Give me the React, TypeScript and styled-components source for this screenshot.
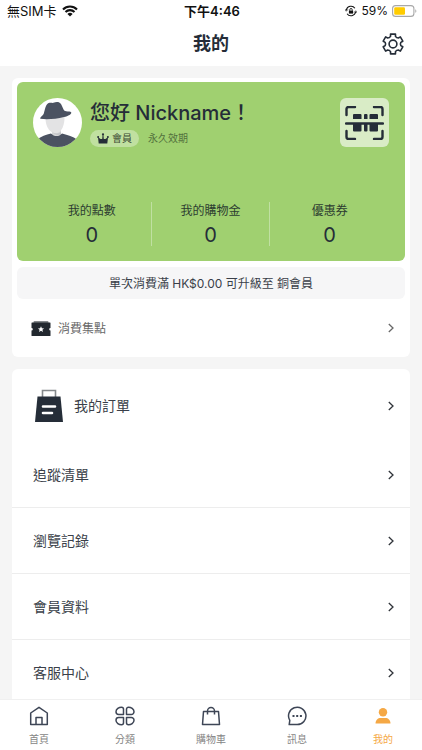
import React from 'react';
import styled, { createGlobalStyle } from 'styled-components';

const INK = '#252d38';

const GlobalStyle = createGlobalStyle`
  *, *::before, *::after { box-sizing: border-box; }
  body {
    margin: 0;
    background: #f5f5f5;
    color: ${INK};
    font-family: Inter, "Noto Sans CJK TC", sans-serif;
  }
  a { color: inherit; text-decoration: none; }
  button { padding: 0; border: 0; background: none; color: inherit; font: inherit; cursor: pointer; }
  h1, h2, p, dl, dd, ul { margin: 0; padding: 0; }
  ul { list-style: none; }
  svg { display: block; flex: none; }
`;

const Screen = styled.div`
  display: flex;
  flex-direction: column;
  height: 100vh;
  overflow: hidden;
`;

const TopArea = styled.header`
  flex: none;
  background: #fff;
`;

const StatusBar = styled.div`
  display: grid;
  grid-template-columns: 1fr auto 1fr;
  align-items: center;
  height: 22px;
  padding: 0 5px 0 7px;
  color: #111;
  font-size: 12px;
  line-height: 20px;
`;

const StatusGroup = styled.div<{ $end?: boolean }>`
  display: flex;
  align-items: center;
  justify-content: ${(p) => (p.$end ? 'flex-end' : 'flex-start')};
  gap: ${(p) => (p.$end ? 4 : 5)}px;
`;

const Carrier = styled.span`
  font-size: 13px;
`;

const Clock = styled.time`
  font-size: 13px;
  font-weight: 600;
`;

const TitleBar = styled.div`
  display: grid;
  grid-template-columns: 1fr auto 1fr;
  align-items: center;
  height: 44px;
  padding: 0 17px;
`;

const PageTitle = styled.h1`
  grid-column: 2;
  font-size: 18px;
  line-height: 24px;
  font-weight: 600;
`;

const SettingsButton = styled.button`
  justify-self: end;
`;

const Content = styled.main`
  flex: 1;
  min-height: 0;
  overflow: hidden;
  display: flex;
  flex-direction: column;
  gap: 12px;
  padding: 12px 12px 0;
`;

const Card = styled.section<{ $padded?: boolean }>`
  flex: none;
  padding: ${(p) => (p.$padded ? '4px 5px 0' : '0')};
  border-radius: 6px;
  background: #fff;
`;

const MemberPanel = styled.div`
  padding: 16px 16px 15px;
  border-radius: 6px;
  background: #a0d070;
`;

const Profile = styled.div`
  display: flex;
  gap: 8px;
`;

const Identity = styled.div`
  flex: 1;
  min-width: 0;
`;

const Greeting = styled.h2`
  height: 32px;
  font-size: 20px;
  line-height: 30px;
  font-weight: 500;
  white-space: nowrap;
`;

const Membership = styled.div`
  display: flex;
  align-items: center;
  gap: 9px;
  color: #53703d;
  font-size: 10px;
  line-height: 17px;
`;

const LevelBadge = styled.span`
  display: flex;
  align-items: center;
  gap: 3px;
  height: 17px;
  padding: 0 7px;
  border-radius: 9px;
  background: #c0e0a0;
  color: #3c4b35;
`;

const ScanButton = styled.button`
  flex: none;
  display: grid;
  place-items: center;
  width: 49px;
  height: 49px;
  border-radius: 6px;
  background: #d9ecc6;
`;

const Balances = styled.dl`
  display: grid;
  grid-template-columns: repeat(3, 1fr);
  margin-top: 55px;
`;

const Balance = styled.div`
  height: 44px;
  padding-top: 1px;
  text-align: center;
  &:not(:last-child) { border-right: 1px solid #c0e0a2; }
`;

const BalanceLabel = styled.dt`
  color: #2d3d30;
  font-size: 12px;
  line-height: 16px;
`;

const BalanceValue = styled.dd`
  font-size: 20px;
  line-height: 32px;
`;

const UpgradeNote = styled.p`
  margin-top: 6px;
  padding-top: 2px;
  border-radius: 6px;
  background: #f6f6f7;
  color: #3a3f49;
  font-size: 12px;
  line-height: 30px;
  text-align: center;
`;

const StampLink = styled.a`
  display: flex;
  align-items: center;
  gap: 7px;
  height: 58px;
  padding: 0 11px 0 14px;
  color: #686868;
  font-size: 12px;
`;

const MenuItem = styled.li`
  & + & + & { border-top: 1px solid #ededed; }
`;

const MenuLink = styled.a<{ $featured?: boolean }>`
  display: flex;
  align-items: center;
  gap: 11px;
  height: ${(p) => (p.$featured ? 73 : 65)}px;
  padding: 0 16px 0 ${(p) => (p.$featured ? 23 : 21)}px;
  color: #3a3f49;
  font-size: 14px;
`;

const LinkLabel = styled.span`
  flex: 1;
  padding-bottom: 2px;
`;

const TabBar = styled.nav`
  flex: none;
  display: grid;
  grid-template-columns: repeat(5, 1fr);
  height: 51px;
  margin: 0 -4px;
  border-top: 1px solid #f0f0f0;
  background: #fff;
`;

const Tab = styled.a<{ $active?: boolean }>`
  display: flex;
  flex-direction: column;
  align-items: center;
  gap: 5px;
  padding-top: 6px;
  color: ${(p) => (p.$active ? '#f5a845' : '#858585')};
  font-size: 10px;
  line-height: 16px;
`;

const WifiIcon = () => (
  <svg width="16" height="12" viewBox="0 0 16 12" aria-hidden="true">
    <path d="M1 4.4a10 10 0 0 1 14 0M3.5 7a6.4 6.4 0 0 1 9 0" fill="none" stroke="#111" strokeWidth="2.1" />
    <path d="M8 11.6 5.4 9a3.8 3.8 0 0 1 5.2 0Z" fill="#111" />
  </svg>
);

const RotationLockIcon = () => (
  <svg width="12" height="12" viewBox="0 0 12 12" fill="none" stroke="#111" aria-hidden="true">
    <path d="M1.400 5a4.700 4.700 0 0 1 8.500-1.700M10.600 7a4.700 4.700 0 0 1-8.500 1.700" strokeWidth="1.100" />
    <path d="m0 4.200 1.300 2 1.500-1.700M12 7.800l-1.300-2-1.500 1.700" strokeWidth=".8" />
    <path d="M3.900 5.600h4.200v3H3.900z" fill="#111" stroke="none" />
    <path d="M4.800 5.800V4.700a1.200 1.200 0 0 1 2.400 0v1.100" strokeWidth=".9" />
  </svg>
);

const BatteryIcon = () => (
  <svg width="25" height="12" viewBox="0 0 25 12" aria-hidden="true">
    <rect x=".6" y=".6" width="21.3" height="10.8" rx="3" fill="none" stroke="#a8a8a8" strokeWidth="1.1" />
    <rect x="2.2" y="2.2" width="10.8" height="7.6" rx="1.3" fill="#fc0" />
    <path d="M23.3 4.2c1.4.5 1.4 3.1 0 3.6Z" fill="#a8a8a8" />
  </svg>
);

const polar = (radius: number, degrees: number) => {
  const a = (degrees * Math.PI) / 180;
  return `${(12 + radius * Math.cos(a)).toFixed(2)} ${(12 + radius * Math.sin(a)).toFixed(2)}`;
};

const gearOutline =
  [30, 90, 150, 210, 270, 330]
    .map(
      (t, i) =>
        `${i ? 'L' : 'M'}${polar(8, t - 18)}L${polar(10.2, t - 14)}L${polar(10.2, t + 14)}L${polar(8, t + 18)}Q${polar(6.9, t + 30)} ${polar(8, t + 42)}`,
    )
    .join('') + 'Z';

const GearIcon = () => (
  <svg width="24" height="24" viewBox="0 0 24 24" fill="none" stroke={INK} strokeWidth="1.600" strokeLinejoin="round" aria-hidden="true">
    <path d={gearOutline} />
    <circle cx="12" cy="12" r="3.900" />
  </svg>
);

const Avatar = () => (
  <svg width="49" height="49" viewBox="0 0 49 49" role="img" aria-label="Nickname">
    <defs>
      <clipPath id="avatar-circle"><circle cx="24.5" cy="24.5" r="24.5" /></clipPath>
    </defs>
    <g clipPath="url(#avatar-circle)">
      <path d="M0 0h49v49H0z" fill="#fff" />
      <path d="M19 30h9v8l-4 3-5-3Z" fill="#d4d5d7" />
      <path d="M12.500 18C12 26 15 34 22 35.500 29 35.500 32 26 31.500 17Z" fill="#e3e3e4" />
      <path d="M19 33.500C21 35.800 24 36.300 28 34v2C25 38 21 37 19 33.500Z" fill="#c3c4c7" />
      <path d="M4 41.500C8 38.500 13 36.800 18 35.500 21 38.800 26 39 29 35.500 35 37 40 38.500 44 41.500L38 50H8Z" fill="#4b5261" />
      <path d="M7.300 20.800C6.800 19 9.500 18.500 10.800 15.500 12 12 12.500 5.500 16.500 4.800 18.500 4.400 19 5.200 20.500 4.800 23 3.500 26.500 3.500 28 6 29.500 8.500 30 11.500 31.500 12.800 33.500 13.800 36 13.400 38 13.900 39.500 16 35 18 31 19 23 21 14 21.800 7.300 20.800Z" fill="#4b5261" />
    </g>
  </svg>
);

const CrownIcon = () => (
  <svg width="12" height="11" viewBox="0 0 12 11" fill={INK} aria-hidden="true">
    <circle cx="6" cy="1.300" r="1.100" /><circle cx="1.100" cy="4" r="1" /><circle cx="10.900" cy="4" r="1" />
    <path d="m1 4.200 2.600 1.800h1.600L5.600 2h.8l.4 4h1.600L11 4.200l-.7 6.300H1.700Z" />
  </svg>
);

const ScanIcon = () => (
  <svg width="39" height="34" viewBox="0 0 39 34" fill={INK} aria-hidden="true">
    <path d="M1.500 9V3a2 2 0 0 1 2-2h6.500M29 1h6.500a2 2 0 0 1 2 2v6M1.500 25v6a2 2 0 0 0 2 2h6.500M29 33h6.500a2 2 0 0 0 2-2v-6M1 17.500h37" fill="none" stroke={INK} strokeWidth="2.400" strokeLinecap="round" />
    <path d="M9 8h6.500a1 1 0 0 1 1 1v4H8V9a1 1 0 0 1 1-1ZM20 8h1.500a1 1 0 0 1 1 1v4H19V9a1 1 0 0 1 1-1ZM25.500 8H32a1 1 0 0 1 1 1v4h-8.500V9a1 1 0 0 1 1-1ZM8 18h8.500v6.500a1 1 0 0 1-1 1H9a1 1 0 0 1-1-1ZM19 18h3.500v6.500a1 1 0 0 1-1 1H20a1 1 0 0 1-1-1ZM24.500 18H33v6.500a1 1 0 0 1-1 1h-6.500a1 1 0 0 1-1-1Z" />
  </svg>
);

const StampIcon = () => (
  <svg width="20" height="17" viewBox="0 0 20 17" aria-hidden="true">
    <path d="M2.500 3V2q0-1 1-1h13q1 0 1 1v1Z" fill="#85898c" />
    <path d="M1 2.500h18q.5 0 .5.5V8a1.300 1.300 0 0 0 0 2.600v5q0 .5-.5.500H1q-.5 0-.5-.5v-5A1.300 1.300 0 0 0 .5 8V3Q.5 2.500 1 2.500Z" fill="#22282f" />
    <path d="m10 6.200.9 2 2.200.2-1.700 1.400.6 2.200-2-1.200L8 12l.6-2.200-1.700-1.400 2.200-.2Z" fill="#fff" />
  </svg>
);

const OrderBagIcon = () => (
  <svg width="28" height="34" viewBox="0 0 28 34" aria-hidden="true">
    <path d="M7.500 8V1.500h13V8" fill="none" stroke="#85898c" strokeWidth="1.600" />
    <path d="M2.500 7.500h23L28 33H0Z" fill={INK} />
    <path d="M8 17.500h12M8 24h9" stroke="#fff" strokeWidth="2.600" strokeLinecap="round" />
  </svg>
);

const Chevron = ({ color = '#30343a' }: { color?: string }) => (
  <svg width="6" height="10" viewBox="0 0 6 10" fill="none" stroke={color} strokeWidth="1.300" aria-hidden="true">
    <path d="m.8 1 4.200 4-4.200 4" />
  </svg>
);

const TabIcon = ({ children }: { children: React.ReactNode }) => (
  <svg width="20" height="20" viewBox="0 0 20 20" fill="none" stroke="#3e4656" strokeWidth="1.500" strokeLinejoin="round" aria-hidden="true">
    {children}
  </svg>
);

const tabs = [
  { label: '首頁', icon: <path d="M1.700 18.500V7L10 1.300 18.300 7v11.500ZM7 18.500v-7h6v7" /> },
  {
    label: '分類',
    icon: (
      <path d="M8.500 8.500H3.700A2.700 2.700 0 0 1 1 5.800C1 3 4 1.200 6.500 1.200a2 2 0 0 1 2 2ZM11.500 8.500h4.800A2.700 2.700 0 0 0 19 5.800c0-2.800-3-4.600-5.500-4.600a2 2 0 0 0-2 2ZM8.500 11.500H3.700A2.700 2.700 0 0 0 1 14.200c0 2.800 3 4.600 5.500 4.600a2 2 0 0 0 2-2ZM11.500 11.500h4.800a2.700 2.700 0 0 1 2.700 2.700c0 2.800-3 4.600-5.500 4.600a2 2 0 0 1-2-2Z" />
    ),
  },
  { label: '購物車', icon: <path d="M2.500 5.500h15l1 13h-17ZM6.500 8.500V5a3.500 3.500 0 0 1 7 0v3.500" /> },
  {
    label: '訊息',
    icon: (
      <>
        <path d="M2.200 18.600h8a8.700 8.700 0 1 0-7.400-4.200Z" />
        <path d="M5.500 10h2M9.200 10h2M12.900 10h2" strokeWidth="1.800" />
      </>
    ),
  },
  {
    label: '我的',
    active: true,
    icon: (
      <g fill="#f5a845" stroke="none">
        <circle cx="10" cy="6.200" r="4.200" />
        <path d="M2.500 17.500c0-3.500 2.500-5.500 5-5.500h5c2.500 0 5 2 5 5.500Z" />
      </g>
    ),
  },
];

const balances = [
  { label: '我的點數', value: 0 },
  { label: '我的購物金', value: 0 },
  { label: '優惠券', value: 0 },
];

const menu = ['追蹤清單', '瀏覽記錄', '會員資料', '客服中心'];

export default function App() {
  return (
    <Screen>
      <GlobalStyle />
      <TopArea>
        <StatusBar>
          <StatusGroup>
            <Carrier>無SIM卡</Carrier>
            <WifiIcon />
          </StatusGroup>
          <Clock>下午4:46</Clock>
          <StatusGroup $end>
            <RotationLockIcon />
            <span>59%</span>
            <BatteryIcon />
          </StatusGroup>
        </StatusBar>
        <TitleBar>
          <PageTitle>我的</PageTitle>
          <SettingsButton type="button" aria-label="設定">
            <GearIcon />
          </SettingsButton>
        </TitleBar>
      </TopArea>

      <Content>
        <Card $padded>
          <MemberPanel>
            <Profile>
              <Avatar />
              <Identity>
                <Greeting>您好 Nickname！</Greeting>
                <Membership>
                  <LevelBadge><CrownIcon />會員</LevelBadge>
                  <span>永久效期</span>
                </Membership>
              </Identity>
              <ScanButton type="button" aria-label="掃描"><ScanIcon /></ScanButton>
            </Profile>
            <Balances>
              {balances.map((b) => (
                <Balance key={b.label}>
                  <BalanceLabel>{b.label}</BalanceLabel>
                  <BalanceValue>{b.value}</BalanceValue>
                </Balance>
              ))}
            </Balances>
          </MemberPanel>
          <UpgradeNote>單次消費滿 HK$0.00 可升級至 銅會員</UpgradeNote>
          <StampLink href="#stamps">
            <StampIcon />
            <LinkLabel>消費集點</LinkLabel>
            <Chevron color="#686868" />
          </StampLink>
        </Card>

        <Card>
          <ul>
            <MenuItem>
              <MenuLink href="#orders" $featured>
                <OrderBagIcon />
                <LinkLabel>我的訂單</LinkLabel>
                <Chevron />
              </MenuLink>
            </MenuItem>
            {menu.map((label) => (
              <MenuItem key={label}>
                <MenuLink href={`#${label}`}>
                  <LinkLabel>{label}</LinkLabel>
                  <Chevron />
                </MenuLink>
              </MenuItem>
            ))}
          </ul>
        </Card>
      </Content>

      <TabBar>
        {tabs.map((tab) => (
          <Tab key={tab.label} href={`#${tab.label}`} $active={tab.active} aria-current={tab.active ? 'page' : undefined}>
            <TabIcon>{tab.icon}</TabIcon>
            {tab.label}
          </Tab>
        ))}
      </TabBar>
    </Screen>
  );
}
